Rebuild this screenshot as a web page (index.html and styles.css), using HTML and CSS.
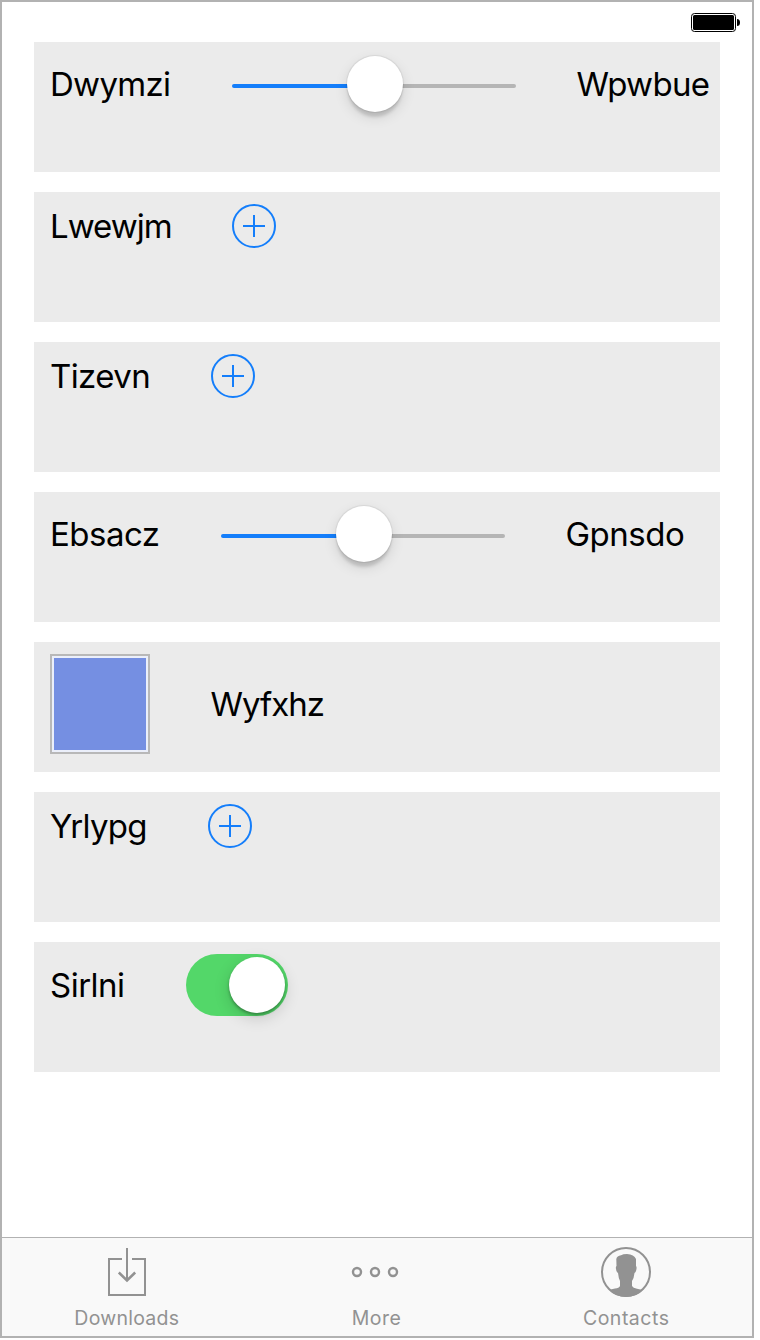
FILE: index.html
```html
<!DOCTYPE html>
<html lang="en">
<head>
<meta charset="utf-8">
<title>Controls</title>
<link rel="stylesheet" href="styles.css">
</head>
<body>
<div class="phone">
  <header class="status">
    <svg class="battery" width="50" height="20" viewBox="0 0 50 20"><rect x=".5" y=".5" width="44" height="18" rx="3" fill="none" stroke="#000"/><rect x="2" y="2" width="41" height="15" rx="1.5"/><path d="M46 6q3 0 3 3.500t-3 3.500z"/></svg>
  </header>
  <main class="rows">
    <section class="row"><div class="line">
      <span class="label dwymzi">Dwymzi</span>
      <div class="slider"><div class="fill"></div><div class="rest"></div><div class="knob"></div></div>
      <span class="label wpwbue">Wpwbue</span>
    </div></section>
    <section class="row"><div class="line">
      <span class="label lwewjm">Lwewjm</span>
      <svg class="add" width="44" height="44" viewBox="0 0 44 44"><circle cx="22" cy="22" r="21"/><path d="M11 22h22M22 11v22"/></svg>
    </div></section>
    <section class="row"><div class="line">
      <span class="label tizevn">Tizevn</span>
      <svg class="add" width="44" height="44" viewBox="0 0 44 44"><circle cx="22" cy="22" r="21"/><path d="M11 22h22M22 11v22"/></svg>
    </div></section>
    <section class="row"><div class="line">
      <span class="label ebsacz">Ebsacz</span>
      <div class="slider"><div class="fill"></div><div class="rest"></div><div class="knob"></div></div>
      <span class="label gpnsdo">Gpnsdo</span>
    </div></section>
    <section class="row"><div class="line">
      <div class="swatch"></div>
      <span class="label wyfxhz">Wyfxhz</span>
    </div></section>
    <section class="row"><div class="line">
      <span class="label yrlypg">Yrlypg</span>
      <svg class="add" width="44" height="44" viewBox="0 0 44 44"><circle cx="22" cy="22" r="21"/><path d="M11 22h22M22 11v22"/></svg>
    </div></section>
    <section class="row"><div class="line">
      <span class="label sirlni">Sirlni</span>
      <div class="toggle"><div class="thumb"></div></div>
    </div></section>
  </main>
  <nav class="tabs">
    <div class="tab">
      <svg width="52" height="52" viewBox="0 0 52 52"><path class="stroke" d="M21 13H8v36h36V13H31M26 2v33"/><path class="stroke arrow" d="M17.800 26.500l8.200 8 8.200-8"/></svg>
      <span class="caption downloads">Downloads</span>
    </div>
    <div class="tab">
      <svg width="52" height="52" viewBox="0 0 52 52"><g class="ring"><circle cx="6" cy="26" r="4"/><circle cx="24" cy="26" r="4"/><circle cx="42" cy="26" r="4"/></g></svg>
      <span class="caption more">More</span>
    </div>
    <div class="tab">
      <svg width="52" height="52" viewBox="0 0 52 52"><circle class="stroke" cx="26" cy="26" r="24"/><path class="solid" d="M16.300 13Q17 10 21 9.300Q23 8 27 8Q34 8.500 36 13V20Q37.200 21 36 25Q35.500 26.500 34.500 27Q34 32 32 35V40Q33 42 37 42.700Q41 43.300 42.500 44.500Q36 51 26 51T9.500 44.500Q11 43 15 42.500Q19 42 20 40V35Q18.500 32 18 27Q16.500 26.500 16 23Q15.500 21 16.500 20Z"/></svg>
      <span class="caption contacts">Contacts</span>
    </div>
  </nav>
</div>
</body>
</html>
```

FILE: styles.css
```css
* { box-sizing: border-box; }
body { margin: 0; background: #fff; font-family: Inter, "Liberation Sans", sans-serif; }
.phone { display: flex; flex-direction: column; width: 754px; height: 1338px; border: 2px solid #b2b2b2; background: #fff; }
.status { display: flex; justify-content: flex-end; height: 40px; padding: 11px 11px 0 0; }
.battery { display: block; }
.rows { display: flex; flex-direction: column; gap: 20px; flex: 1; padding: 0 32px; }
.row { height: 130px; padding: 12px 0 0 16px; background: #ebebeb; }
.line { display: flex; align-items: center; gap: 60px; }
.label { font-size: 33px; line-height: 40px; color: #000; white-space: nowrap; }
.dwymzi, .lwewjm { width: 122px; }
.dwymzi { letter-spacing: -.7px; }
.wpwbue { padding-left: .5px; letter-spacing: -.7px; }
.lwewjm { letter-spacing: -1px; }
.tizevn { width: 101px; letter-spacing: -.6px; }
.ebsacz { width: 111px; letter-spacing: -.5px; }
.gpnsdo { padding-left: .5px; letter-spacing: -.5px; }
.wyfxhz { padding-left: .5px; letter-spacing: -1px; }
.yrlypg { width: 98px; letter-spacing: -.75px; }
.sirlni { width: 76px; letter-spacing: -.5px; }
.slider { position: relative; display: flex; align-items: center; width: 284px; height: 60px; padding-top: 4px; }
.fill, .rest { flex: 1; height: 4px; }
.fill { background: #147efb; border-radius: 2px 0 0 2px; }
.rest { background: #b5b5b5; border-radius: 0 2px 2px 0; }
.knob { position: absolute; left: 115px; top: 2px; width: 56px; height: 56px; border-radius: 50%; background: #fff; box-shadow: 0 0 1px 1px rgba(0,0,0,.07), 0 6px 3px -1px rgba(0,0,0,.13), 0 5px 14px rgba(0,0,0,.12); }
.add { display: block; fill: none; stroke: #147efb; stroke-width: 2; }
.swatch { width: 100px; height: 100px; border: 2px solid #b8b8b8; padding: 2px; background: #758fe2 content-box; box-shadow: inset 0 0 0 2px #ebeffa; }
.toggle { display: flex; justify-content: flex-end; width: 102px; height: 62px; padding: 3px; border-radius: 31px; background: #53d769; }
.thumb { width: 56px; height: 56px; border-radius: 50%; background: #fff; box-shadow: 0 2px 3px rgba(0,0,0,.3), 0 5px 16px rgba(0,0,0,.16); }
.tabs { display: flex; height: 99px; padding-right: 1px; border-top: 1px solid #b2b2b2; background: #f9f9f9; }
.tab { flex: 1; display: flex; flex-direction: column; align-items: center; padding-top: 8px; color: #929292; }
.tab svg { display: block; }
.stroke { fill: none; stroke: #929292; stroke-width: 2; }
.arrow { stroke-width: 2.500; }
.ring { fill: none; stroke: #929292; stroke-width: 2.400; }
.solid { fill: #929292; }
.caption { margin-top: 8px; font-size: 19.5px; line-height: 24px; letter-spacing: .4px; }
.downloads { letter-spacing: .25px; }
.contacts { letter-spacing: .5px; }
```
